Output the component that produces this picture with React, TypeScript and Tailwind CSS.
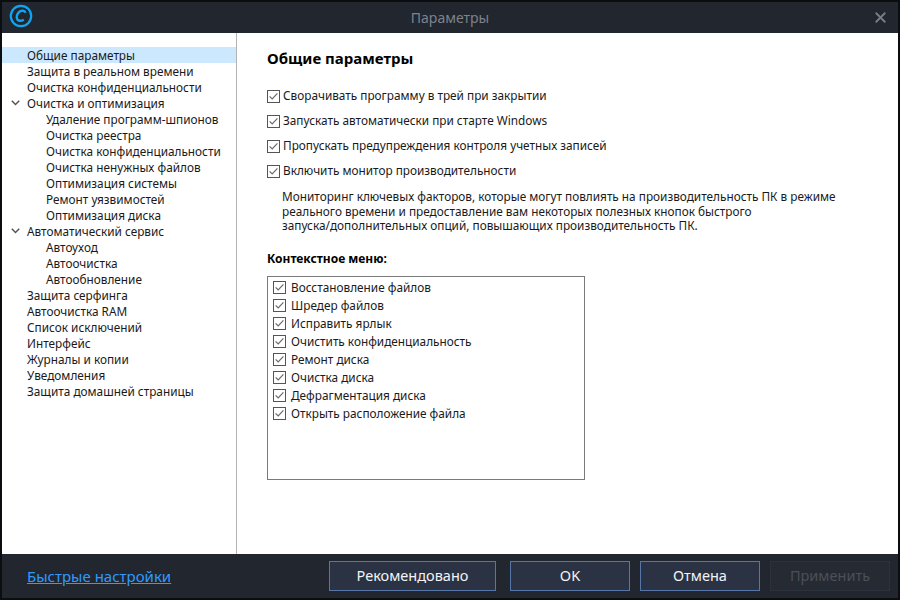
import { X } from 'lucide-react';

const navItems = [
  { label: 'Общие параметры', level: 0, active: true },
  { label: 'Защита в реальном времени', level: 0 },
  { label: 'Очистка конфиденциальности', level: 0 },
  { label: 'Очистка и оптимизация', level: 0, open: true },
  { label: 'Удаление программ-шпионов', level: 1 },
  { label: 'Очистка реестра', level: 1 },
  { label: 'Очистка конфиденциальности', level: 1 },
  { label: 'Очистка ненужных файлов', level: 1 },
  { label: 'Оптимизация системы', level: 1 },
  { label: 'Ремонт уязвимостей', level: 1 },
  { label: 'Оптимизация диска', level: 1 },
  { label: 'Автоматический сервис', level: 0, open: true },
  { label: 'Автоуход', level: 1 },
  { label: 'Автоочистка', level: 1 },
  { label: 'Автообновление', level: 1 },
  { label: 'Защита серфинга', level: 0 },
  { label: 'Автоочистка RAM', level: 0 },
  { label: 'Список исключений', level: 0 },
  { label: 'Интерфейс', level: 0 },
  { label: 'Журналы и копии', level: 0 },
  { label: 'Уведомления', level: 0 },
  { label: 'Защита домашней страницы', level: 0 },
];

const options = [
  'Сворачивать программу в трей при закрытии',
  'Запускать автоматически при старте Windows',
  'Пропускать предупреждения контроля учетных записей',
  'Включить монитор производительности',
];

const contextItems = [
  'Восстановление файлов',
  'Шредер файлов',
  'Исправить ярлык',
  'Очистить конфиденциальность',
  'Ремонт диска',
  'Очистка диска',
  'Дефрагментация диска',
  'Открыть расположение файла',
];

function CheckBox() {
  return (
    <svg width="13" height="13" viewBox="0 0 13 13" className="shrink-0">
      <rect x="0.5" y="0.5" width="12" height="12" fill="#fff" stroke="#555" />
      <path d="M2.6 6.4 5.2 9 10.4 3.4" fill="none" stroke="#6a6a6a" strokeWidth="1.2" />
    </svg>
  );
}

function Chevron() {
  return (
    <svg width="9" height="6" viewBox="0 0 9 6">
      <path d="M0.8 0.8 4.5 4.5 8.2 0.8" fill="none" stroke="#555" strokeWidth="1.5" />
    </svg>
  );
}

function Logo() {
  return (
    <svg width="24" height="24" viewBox="0 0 24 24" className="-mt-[3px]">
      <circle cx="12" cy="12" r="10.2" fill="none" stroke="#0ea5f4" strokeWidth="2.2" />
      <path d="M16.4 8.8C16 6.9 13.6 6.2 11.4 7.2 8.8 8.4 7.2 11.8 7.9 14.4 8.5 16.9 11.6 17.6 14.8 15.8" fill="none" stroke="#0ea5f4" strokeWidth="2.4" />
    </svg>
  );
}

function FooterButton({ label, className, disabled }: { label: string; className: string; disabled?: boolean }) {
  return (
    <button
      className={
        disabled
          ? `h-[30px] border border-[#2c323c] bg-[#262b33] text-[#4b5058] text-[14.5px] ${className}`
          : `h-[30px] border border-[#5676a8] bg-[#2a3243] text-[#f2f4f7] text-[14.5px] ${className}`
      }
    >
      {label}
    </button>
  );
}

export default function App() {
  return (
    <div className="w-[900px] h-[600px] flex flex-col bg-[#22262f] border-2 border-[#0c0d10] overflow-hidden font-['Noto_Sans',sans-serif]">
      <div className="h-[31px] shrink-0 flex items-center justify-between pl-[7px] pr-[9px] relative">
        <Logo />
        <span className="absolute left-0 right-0 text-center text-[14px] text-[#7d828b]">Параметры</span>
        <X size={17} strokeWidth={2.6} className="text-[#797d86]" />
      </div>

      <div className="flex-1 flex bg-white min-h-0 text-[11.8px] text-[#1a1a1a]">
        <div className="w-[235px] shrink-0 border-r border-[#b4b4b4] pt-[14px]">
          {navItems.map((item, i) => (
            <div
              key={i}
              className={`h-4 flex items-center relative leading-4 ${item.active ? 'bg-[#cce8ff]' : ''} ${item.level === 1 ? 'pl-[44px]' : 'pl-[25px]'}`}
            >
              {item.open && (
                <span className="absolute left-[9px] top-[5px] flex">
                  <Chevron />
                </span>
              )}
              {item.label}
            </div>
          ))}
        </div>

        <div className="flex-1 pl-[30px] pt-[15px]">
          <h1 className="text-[15px] font-bold text-black leading-5">Общие параметры</h1>
          <div className="mt-[20px] flex flex-col gap-[9px]">
            {options.map(o => (
              <div key={o} className="h-4 flex items-center gap-[3px] whitespace-nowrap">
                <CheckBox />
                {o}
              </div>
            ))}
          </div>
          <p className="mt-[10px] ml-[15px] leading-[14.5px] whitespace-nowrap">
            Мониторинг ключевых факторов, которые могут повлиять на производительность ПК в режиме
            <br />
            реального времени и предоставление вам некоторых полезных кнопок быстрого
            <br />
            запуска/дополнительных опций, повышающих производительность ПК.
          </p>
          <div className="mt-[18px] font-bold text-black leading-4 text-[12px]">Контекстное меню:</div>
          <div className="mt-[9px] w-[318px] h-[204px] border border-[#7a7a7a] pl-[5px] pt-[2px]">
            {contextItems.map(c => (
              <div key={c} className="h-[18px] flex items-center gap-[5px]">
                <CheckBox />
                {c}
              </div>
            ))}
          </div>
        </div>
      </div>

      <div className="h-[44px] shrink-0 flex items-center pl-[25px] pr-[8px]">
        <a className="text-[15px] text-[#2f9bff] underline">Быстрые настройки</a>
        <div className="ml-auto flex">
          <FooterButton label="Рекомендовано" className="w-[167px] mr-[14px]" />
          <FooterButton label="OK" className="w-[120px] mr-[10px]" />
          <FooterButton label="Отмена" className="w-[120px] mr-[10px]" />
          <FooterButton label="Применить" className="w-[120px]" disabled />
        </div>
      </div>
    </div>
  );
}
